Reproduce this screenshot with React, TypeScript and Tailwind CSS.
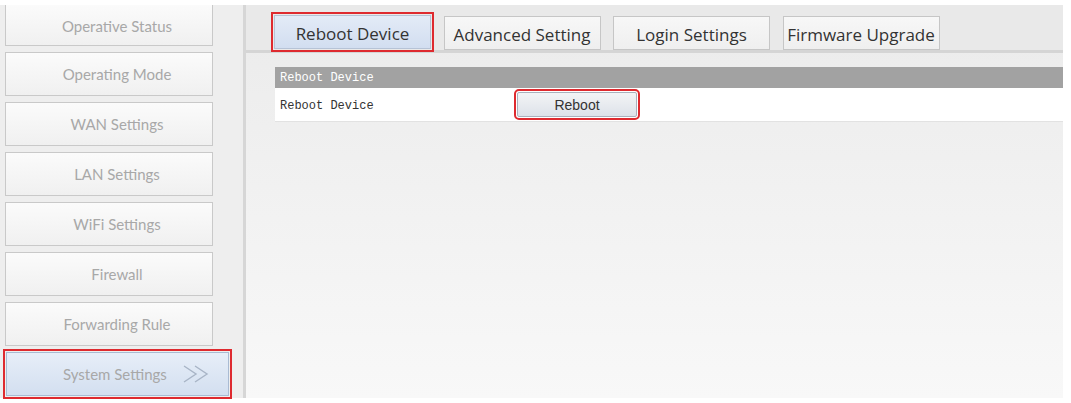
import React from "react"

const menu = [
  "Operative Status",
  "Operating Mode",
  "WAN Settings",
  "LAN Settings",
  "WiFi Settings",
  "Firewall",
  "Forwarding Rule",
]

const tabs = ["Reboot Device", "Advanced Setting", "Login Settings", "Firmware Upgrade"]

export default function App() {
  return (
    <div className="w-[1071px] h-[403px] bg-white flex pt-[5px] pb-[5px] pr-[8px] overflow-hidden">
      {/* sidebar */}
      <div className="w-[246px] shrink-0 bg-[#eeeeee] border-r-[3px] border-r-[#d6d6d6] flex flex-col gap-[6px] pl-[5px]">
        {menu.map((label, i) => (
          <div
            key={label}
            className={
              "w-[208px] flex items-center justify-center pl-4 border border-[#c9c9c9] bg-gradient-to-b from-[#fbfbfb] to-[#f0f0f0] text-[15px] text-[#a8a8a8] font-['Lato',sans-serif] " +
              (i === 0 ? "h-[41px] border-t-0 pt-[3px]" : "h-[44px]")
            }
          >
            {label}
          </div>
        ))}
        <div className="w-[223px] ml-px h-[44px] flex items-center border border-[#a9bbd3] bg-gradient-to-b from-[#e7eef8] to-[#d3dff0] outline-2 outline-offset-1 outline-[#de2a2f] text-[15px] text-[#a8a8a8] font-['Lato',sans-serif]">
          <span className="ml-[56px]">System Settings</span>
          <svg className="ml-[15px]" width="30" height="20" viewBox="0 0 30 20" fill="none" stroke="#a8b4c6" strokeWidth="1.4">
            <path d="M2 2 L14 10 L2 18" />
            <path d="M13 2 L25 10 L13 18" />
          </svg>
        </div>
      </div>

      {/* main */}
      <div className="flex-1 flex flex-col bg-gradient-to-b from-[#ebebeb] to-[#f8f8f8]">
        <div className="h-[48px] bg-[#e9e9e9] border-b-[3px] border-b-[#d5d5d5] flex items-end pl-[28px] gap-[12.5px] shrink-0">
          {tabs.map((t, i) => (
            <div
              key={t}
              className={
                "w-[157px] h-[34px] flex items-center justify-center pt-[3px] border text-[17px] text-[#333] font-['Open_Sans',sans-serif] whitespace-nowrap " +
                (i === 0
                  ? "border-[#b6c3d6] bg-gradient-to-b from-[#e3ebf7] to-[#d2def0] outline-2 outline-offset-1 outline-[#de2a2f] mb-px"
                  : "border-[#c6c6c6] bg-gradient-to-b from-[#f7f7f7] to-[#efefef]")
              }
            >
              {t}
            </div>
          ))}
        </div>

        <div className="pl-[29px] pt-[14px]">
          <div className="h-[21px] bg-[#a2a2a2] flex items-center pl-[5px] text-[12px] text-white font-['Liberation_Mono',monospace]">
            Reboot Device
          </div>
          <div className="h-[34px] bg-white border-b border-b-[#e2e2e2] flex items-center text-[12px] text-[#333] font-['Liberation_Mono',monospace]">
            <span className="w-[242px] pl-[5px] pt-[2px] shrink-0">Reboot Device</span>
            <button className="w-[120px] h-[25px] pt-[2px] rounded-[2px] border border-[#a9b1bd] bg-gradient-to-b from-[#f3f4f6] to-[#dde2e9] outline-2 outline-offset-1 outline-[#de2a2f] text-[14px] text-[#333] font-['Liberation_Sans',sans-serif]">
              Reboot
            </button>
          </div>
        </div>
      </div>
    </div>
  )
}
